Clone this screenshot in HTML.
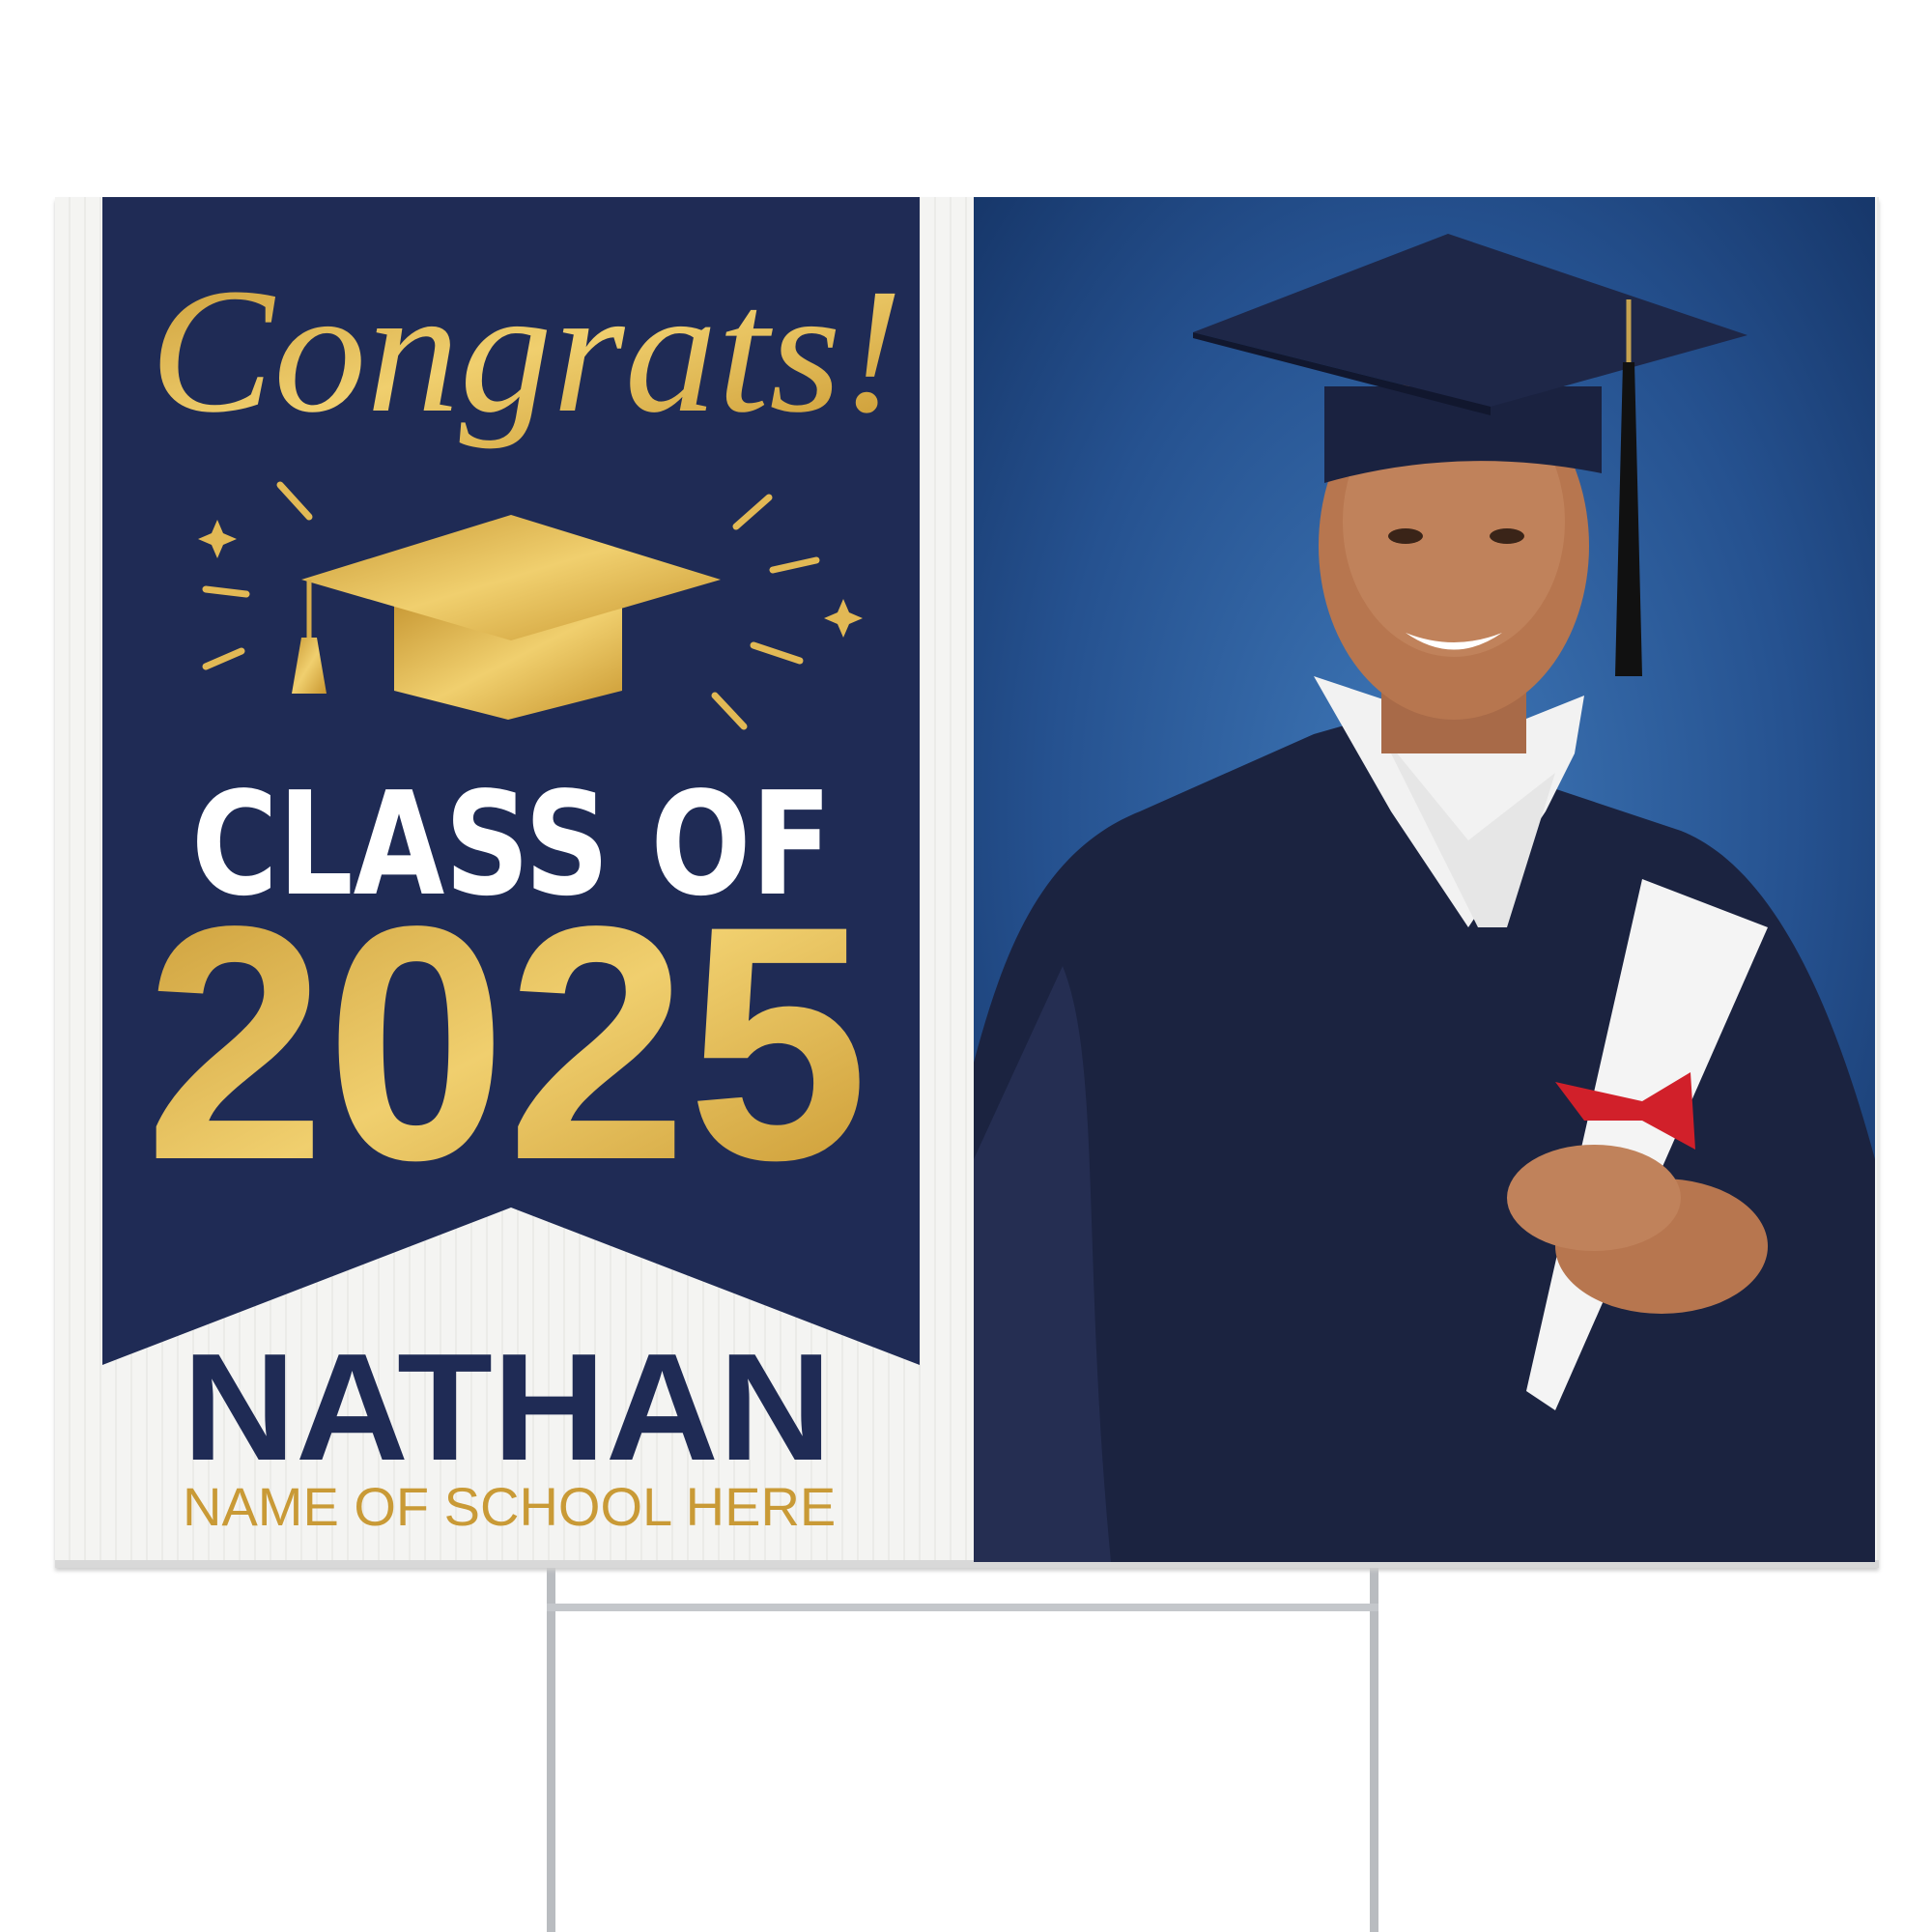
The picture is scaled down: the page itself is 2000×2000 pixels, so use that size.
<!DOCTYPE html>
<html><head><meta charset="utf-8"><style>
body{margin:0;width:2000px;height:2000px;background:#fff;position:relative;overflow:hidden;font-family:"Liberation Sans",sans-serif}
.abs{position:absolute}
</style></head><body>
<div class="abs" style="left:566px;top:1615px;width:9px;height:385px;background:#b9bcc0"></div>
<div class="abs" style="left:1418px;top:1615px;width:9px;height:385px;background:#b9bcc0"></div>
<div class="abs" style="left:566px;top:1660px;width:861px;height:8px;background:#c4c7cb"></div>
<div class="abs" style="left:57px;top:204px;width:1888px;height:1418px;background:repeating-linear-gradient(90deg,#f4f4f2 0 14px,#ebebe8 14px 16px);box-shadow:0 4px 4px #ccc"></div>
<div class="abs" style="left:57px;top:1615px;width:1888px;height:8px;background:#d8d8d8"></div>
<svg class="abs" style="left:0;top:0" width="2000" height="2000">
<defs>
<linearGradient id="g" x1="0" y1="0" x2="1" y2="1"><stop offset="0" stop-color="#c99a36"/><stop offset=".5" stop-color="#f0cf6e"/><stop offset="1" stop-color="#c8962f"/></linearGradient>
<radialGradient id="bg" cx=".5" cy=".45" r=".7"><stop offset="0" stop-color="#3f78b8"/><stop offset=".6" stop-color="#25518f"/><stop offset="1" stop-color="#153466"/></radialGradient>
</defs>
<polygon points="106,204 952,204 952,1413 529,1250 106,1413" fill="#1f2b55"/>
<polygon points="408,625 644,625 644,715 526,745 408,715" fill="url(#g)"/>
<polygon points="312,600 529,533 746,600 529,663" fill="url(#g)"/>
<line x1="320" y1="600" x2="320" y2="660" stroke="#d7ad4c" stroke-width="5"/>
<polygon points="312,660 328,660 338,718 302,718" fill="url(#g)"/>
<g stroke="#e2b955" stroke-width="7" stroke-linecap="round">
<line x1="290" y1="502" x2="320" y2="535"/><line x1="213" y1="610" x2="255" y2="615"/><line x1="213" y1="690" x2="250" y2="674"/>
<line x1="762" y1="545" x2="796" y2="515"/><line x1="800" y1="590" x2="845" y2="580"/><line x1="780" y1="668" x2="828" y2="684"/><line x1="740" y1="720" x2="770" y2="752"/>
</g>
<g fill="#e2b955"><path d="M225,538 l6,14 14,6 -14,6 -6,14 -6,-14 -14,-6 14,-6z"/><path d="M873,620 l6,14 14,6 -14,6 -6,14 -6,-14 -14,-6 14,-6z"/></g>
<text x="155" y="425" font-family="Liberation Serif,serif" font-style="italic" font-size="185" fill="url(#g)" textLength="780" lengthAdjust="spacingAndGlyphs">Congrats!</text>
<text x="198" y="925" font-family="DejaVu Sans,sans-serif" font-weight="bold" font-size="148" fill="#fff" textLength="663" lengthAdjust="spacingAndGlyphs">CLASS OF</text>
<text x="150" y="1199" font-family="Liberation Sans,sans-serif" font-weight="bold" font-size="345" fill="url(#g)" textLength="749" lengthAdjust="spacingAndGlyphs">2025</text>
<text x="189" y="1511" font-family="Liberation Sans,sans-serif" font-weight="bold" font-size="158" fill="#1f2b55" textLength="672" lengthAdjust="spacingAndGlyphs">NATHAN</text>
<text x="189" y="1579" font-family="Liberation Sans,sans-serif" font-size="56" fill="#c99a36">NAME OF SCHOOL HERE</text>
<rect x="1008" y="204" width="933" height="1413" fill="url(#bg)"/>
<path d="M1008,1617 L1008,1100 C1040,980 1080,880 1180,840 L1360,760 L1430,740 L1560,800 L1740,860 C1840,900 1900,1050 1941,1200 L1941,1617 Z" fill="#1b2340"/>
<path d="M1100,1000 C1140,1100 1120,1300 1150,1617 L1008,1617 L1008,1200Z" fill="#252e52"/>
<path d="M1360,700 L1400,770 L1440,840 L1520,960 L1600,840 L1630,780 L1640,720 L1540,760 Z" fill="#f2f2f2"/>
<path d="M1430,760 L1530,960 L1560,960 L1610,800 L1520,870 Z" fill="#e6e6e6"/>
<rect x="1430" y="620" width="150" height="160" fill="#a86a48"/>
<ellipse cx="1505" cy="565" rx="140" ry="180" fill="#b7764f"/>
<ellipse cx="1505" cy="540" rx="115" ry="140" fill="#c0825b"/>
<path d="M1455,655 Q1505,690 1555,655 Q1505,675 1455,655Z" fill="#fff"/>
<ellipse cx="1455" cy="555" rx="18" ry="8" fill="#3a2418"/><ellipse cx="1560" cy="555" rx="18" ry="8" fill="#3a2418"/>
<path d="M1371,400 L1658,400 L1658,490 Q1510,460 1371,500 Z" fill="#1a2240"/>
<polygon points="1235,344 1499,242 1809,347 1543,421" fill="#1e2748"/>
<polygon points="1235,344 1543,421 1543,430 1235,350" fill="#11172e"/>
<line x1="1686" y1="310" x2="1686" y2="380" stroke="#c6a350" stroke-width="5"/>
<path d="M1680,375 L1692,375 L1700,700 L1672,700Z" fill="#111"/>
<polygon points="1700,910 1830,960 1610,1460 1580,1440" fill="#f4f4f4"/>
<ellipse cx="1720" cy="1290" rx="110" ry="70" fill="#b7764f"/>
<ellipse cx="1650" cy="1240" rx="90" ry="55" fill="#c0825b"/>
<path d="M1610,1120 L1700,1140 L1750,1110 L1755,1190 L1700,1160 L1640,1160Z" fill="#d1202a"/>
</svg>
</body></html>
